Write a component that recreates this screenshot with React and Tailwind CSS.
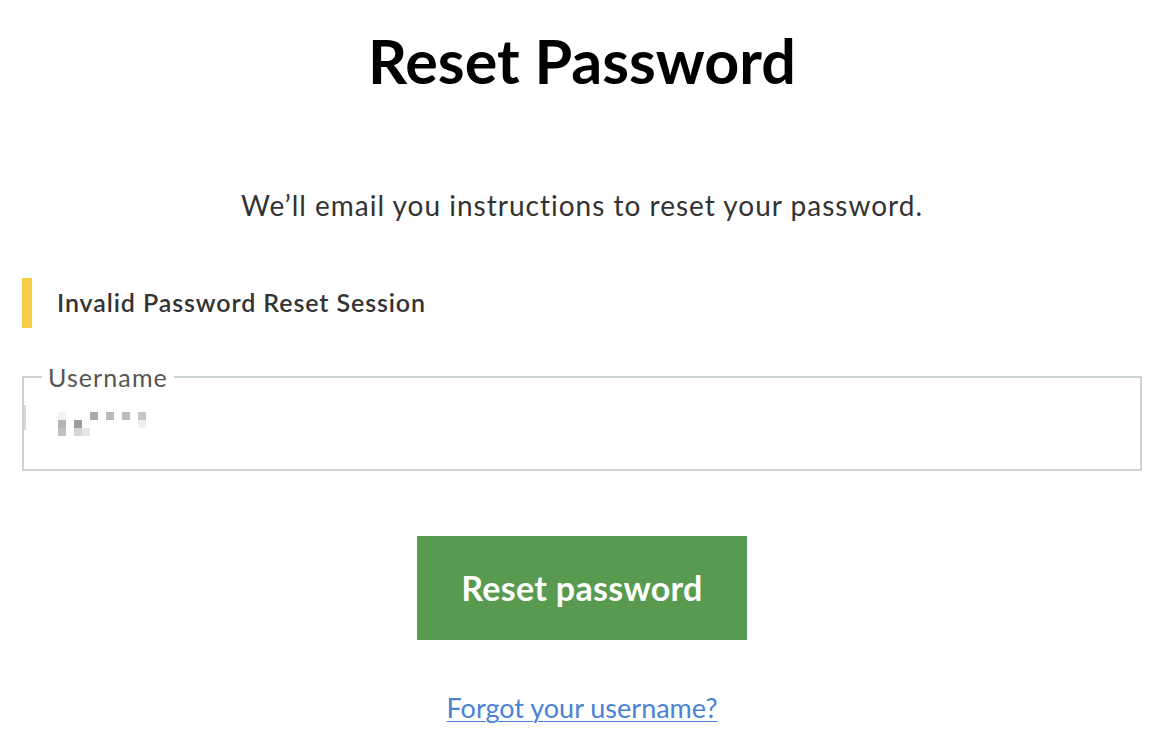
import React from "react";

function Blur() {
  const cells = [
    [0, 0, "#f2f2f2"],
    [0, 1, "#b4b4b4"],
    [0, 2, "#c0c0c0"],
    [2, 1, "#9c9c9c"],
    [2, 2, "#d6d6d6"],
    [3, 2, "#e6e6e6"],
    [4, 0, "#ababab"],
    [6, 0, "#bababa"],
    [8, 0, "#bcbcbc"],
    [10, 0, "#c6c6c6"],
    [10, 1, "#efefef"],
  ];
  return (
    <svg width="88" height="24" viewBox="0 0 88 24">
      {cells.map(([c, r, f], i) => (
        <rect key={i} x={c * 8} y={r * 8} width="8" height="8" fill={f} />
      ))}
    </svg>
  );
}

export default function App() {
  return (
    <div className="w-[1162px] h-[740px] overflow-hidden bg-white pl-[22px] pr-[20px] font-['Lato',sans-serif]">
      <h1 className="pt-[30px] text-center text-[61px] leading-none font-bold text-black">
        Reset Password
      </h1>
      <p className="mt-[100px] text-center text-[28px] leading-none tracking-[1px] text-[#333]">
        We’ll email you instructions to reset your password.
      </p>
      <div className="mt-[59px] flex h-[50px] items-center border-l-[10px] border-[#f7cc45] pl-[25px]">
        <span className="mb-[2px] text-[25px] leading-none font-semibold tracking-[0.9px] text-[#333]">
          Invalid Password Reset Session
        </span>
      </div>
      <fieldset className="mt-[37px] border-2 border-[#ccd3d7]">
        <legend className="ml-[18px] px-[6px] text-[25px] leading-[24px] tracking-[1.1px] text-[#555]">
          Username
        </legend>
        <div className="flex h-[80px] items-start">
          <div className="mt-[16px] h-[25px] w-[2px] bg-[#d3dade]" />
          <div className="mt-[23px] ml-[32px]">
            <Blur />
          </div>
        </div>
      </fieldset>
      <div className="mt-[65px] flex justify-center">
        <button className="h-[104px] w-[330px] bg-[#589b50] text-[34px] leading-none font-bold tracking-[0.3px] text-white">
          Reset password
        </button>
      </div>
      <div className="mt-[54px] text-center">
        <a href="#" className="text-[27px] leading-none text-[#4a83d4] underline decoration-1 underline-offset-[3px]">
          Forgot your username?
        </a>
      </div>
    </div>
  );
}
